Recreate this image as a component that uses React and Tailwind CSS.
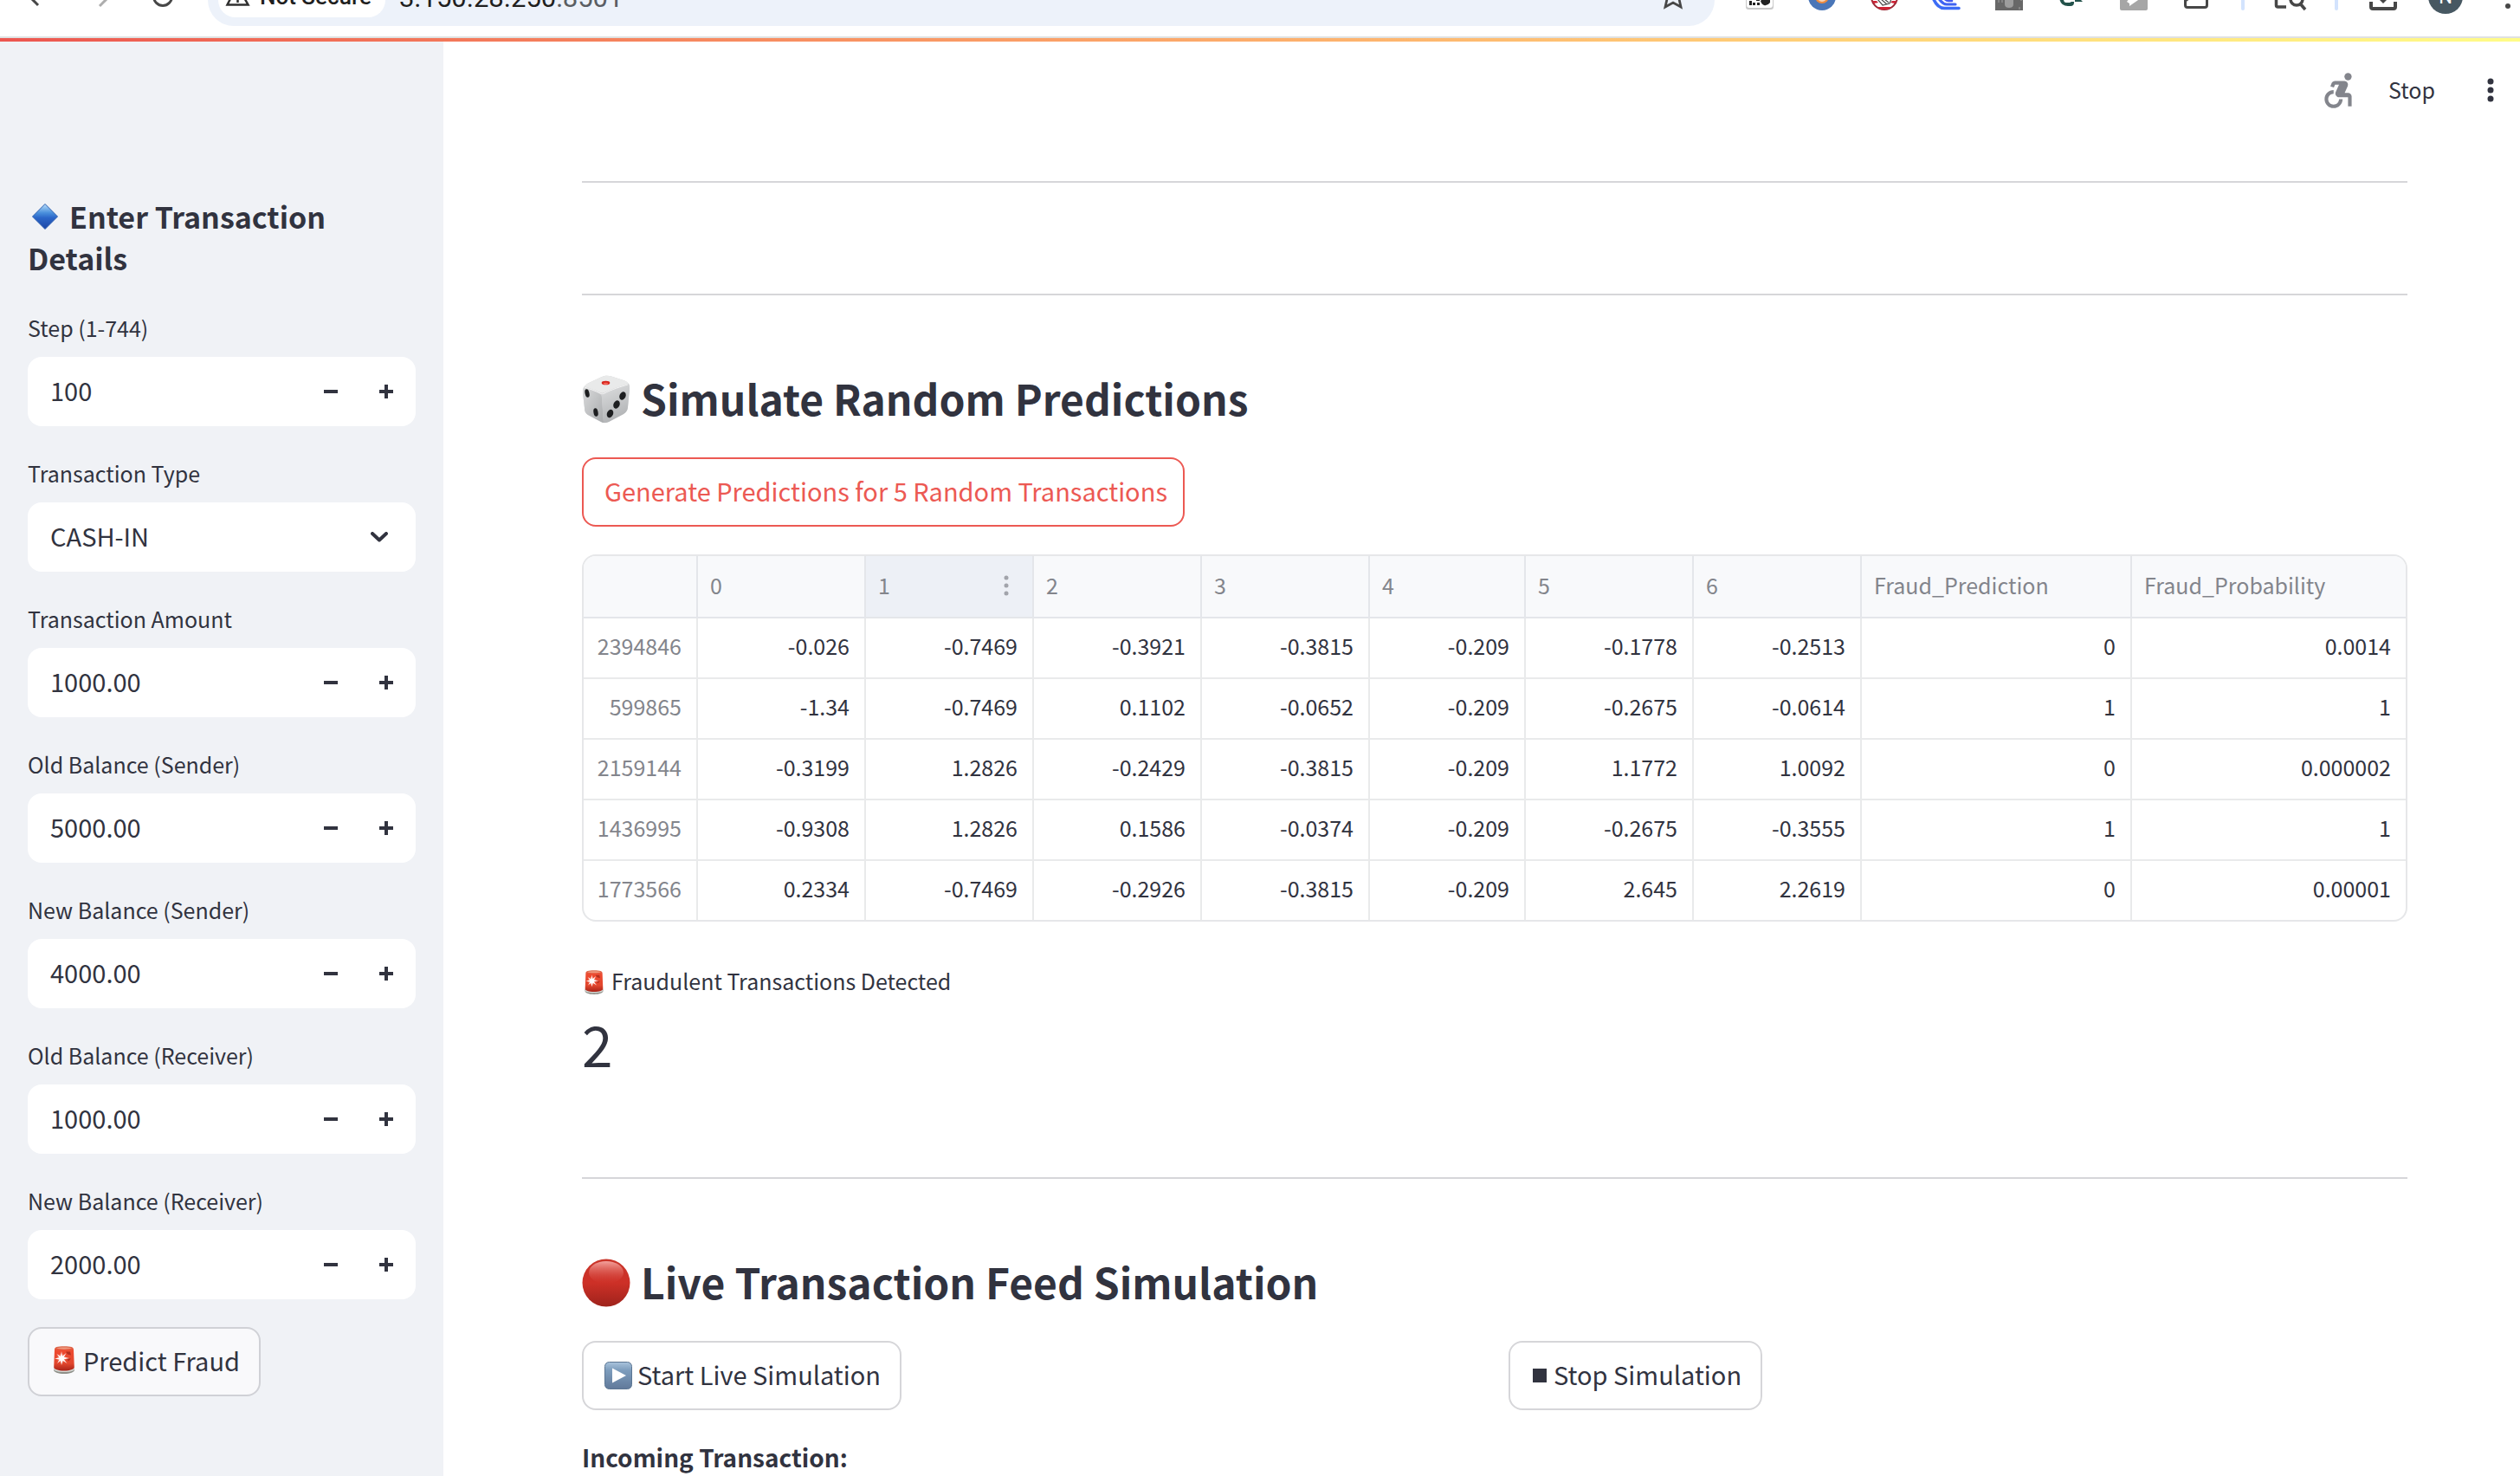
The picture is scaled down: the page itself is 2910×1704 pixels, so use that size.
import React from "react";
import { MdAccessibleForward } from "react-icons/md";

const NUMBER_FIELDS_AFTER_TYPE = [
  { id: "amount", label: "Transaction Amount", value: "1000.00" },
  { id: "old-sender", label: "Old Balance (Sender)", value: "5000.00" },
  { id: "new-sender", label: "New Balance (Sender)", value: "4000.00" },
  { id: "old-receiver", label: "Old Balance (Receiver)", value: "1000.00" },
  { id: "new-receiver", label: "New Balance (Receiver)", value: "2000.00" },
];

const COLUMNS = ["0", "1", "2", "3", "4", "5", "6", "Fraud_Prediction", "Fraud_Probability"];

const ROWS = [
  ["2394846", "-0.026", "-0.7469", "-0.3921", "-0.3815", "-0.209", "-0.1778", "-0.2513", "0", "0.0014"],
  ["599865", "-1.34", "-0.7469", "0.1102", "-0.0652", "-0.209", "-0.2675", "-0.0614", "1", "1"],
  ["2159144", "-0.3199", "1.2826", "-0.2429", "-0.3815", "-0.209", "1.1772", "1.0092", "0", "0.000002"],
  ["1436995", "-0.9308", "1.2826", "0.1586", "-0.0374", "-0.209", "-0.2675", "-0.3555", "1", "1"],
  ["1773566", "0.2334", "-0.7469", "-0.2926", "-0.3815", "-0.209", "2.645", "2.2619", "0", "0.00001"],
];

function DiamondEmoji() {
  return (
    <svg className="h-8 w-8 shrink-0" viewBox="0 0 32 32" aria-hidden="true">
      <defs>
        <linearGradient id="diamond" x1="0" y1="0" x2="0" y2="1">
          <stop offset="0" stopColor="#b9defa" />
          <stop offset="0.35" stopColor="#4a90dc" />
          <stop offset="0.55" stopColor="#2b66c8" />
          <stop offset="1" stopColor="#1c46a5" />
        </linearGradient>
      </defs>
      <path d="M16 1.5 30.500 16 16 30.500 1.500 16Z" fill="url(#diamond)" stroke="#2a5cae" strokeWidth="1" strokeLinejoin="round" />
    </svg>
  );
}

function SirenEmoji({ className }) {
  return (
    <svg className={className} viewBox="0 0 24 32" aria-hidden="true">
      <defs>
        <linearGradient id="siren-glass" x1="0" y1="0" x2="0" y2="1">
          <stop offset="0" stopColor="#d9694c" />
          <stop offset="0.2" stopColor="#ee4a30" />
          <stop offset="0.7" stopColor="#e2472e" />
          <stop offset="1" stopColor="#a92318" />
        </linearGradient>
        <radialGradient id="siren-glow">
          <stop offset="0" stopColor="#ffffff" />
          <stop offset="0.5" stopColor="#ffc9bd" stopOpacity="0.6" />
          <stop offset="1" stopColor="#ff8a75" stopOpacity="0" />
        </radialGradient>
      </defs>
      <path d="M0 25h24v2.500c0 2.500-5 4.500-12 4.500S0 30 0 27.500Z" fill="#8e8f88" />
      <path d="M0 25h24v1.500c0 2-5 3.500-12 3.500S0 28.500 0 26.500Z" fill="#d5d8d4" />
      <path d="M1 4C1 1.200 4 .3 12 .3S23 1.200 23 4l.8 20.500c0 2.300-5 4-11.800 4S.2 26.800.2 24.500Z" fill="url(#siren-glass)" />
      <path d="M3 2.500C6 1 18 1 21 2.500 18 4 6 4 3 2.500Z" fill="#f3b49a" opacity="0.7" />
      <path d="M14 6.500h5l1 4-4-1M15 14.500h5l-3 3z" fill="#b5301f" />
      <circle cx="9" cy="14" r="6" fill="url(#siren-glow)" />
      <path d="M9 6l1 5.700 4.500-3.700-2.800 4.800L18 14l-6.300 1.200 3.800 4.800-5-3.200L9 22l-1-5.200L4 20l2.700-4.500L1 14.500l5.500-1.300L3.500 9 8 12Z" fill="#fff" />
    </svg>
  );
}

function DiceEmoji() {
  return (
    <svg className="h-14 w-14 shrink-0" viewBox="0 0 56 56" aria-hidden="true">
      <defs>
        <linearGradient id="dice-left" x1="0" y1="0" x2="1" y2="1">
          <stop offset="0" stopColor="#d9dadb" />
          <stop offset="1" stopColor="#a9abad" />
        </linearGradient>
        <linearGradient id="dice-right" x1="0" y1="0" x2="0.3" y2="1">
          <stop offset="0" stopColor="#dedfe0" />
          <stop offset="1" stopColor="#b2b4b6" />
        </linearGradient>
      </defs>
      <path d="M1 20C1 14 3 12 8 9L22 2.500c4-2 8-2 12-1L48 6c5 2 7 4 7 9l-2 22c-.4 4-2 6-5 8L31 54c-3 1.500-6 1.500-9 0L7 46c-3-2-4-4-4-8Z" fill="#d0d1d3" />
      <path d="M2 14c4 1 14 5 19 8 1.500 1 2 3 2 5l2 28c-1 0-2-.4-3-1L7 46c-3-2-4-4-4-8L1 20c0-2 .2-4 1-6Z" fill="url(#dice-left)" />
      <path d="M54 10c-7 2-21 7-28 11-2 1-3 3-3 6l2 28c2 .3 4 0 6-1l17-9c3-2 4.600-4 5-8l2-22c0-2-.3-3.700-1-5Z" fill="url(#dice-right)" />
      <path d="M2.500 13C4 11 6 10 8 9l14-6.500c4-2 8-2 12-1L48 6c3 1 5 2 6 4-6 2-20 6-28 10-2 1-3 1-5 0-6-3-13-5-18.500-7Z" fill="#e9eaea" />
      <path d="M3 14c6 2 12 4 18 7 2 1 3 1 5 0 7-4 20-8 27-10" fill="none" stroke="#f4f4f4" strokeWidth="1" />
      <ellipse cx="27.500" cy="9" rx="4.800" ry="2.300" fill="#d8271f" />
      <ellipse cx="27.500" cy="9.800" rx="2.800" ry="1" fill="#f6695c" />
      <g fill="#1d1e20">
        <ellipse cx="6" cy="21" rx="2.500" ry="4.800" transform="rotate(-12 6 21)" />
        <ellipse cx="16" cy="43" rx="2.600" ry="4.800" transform="rotate(-10 16 43)" />
        <ellipse cx="47" cy="24" rx="3.600" ry="4.800" transform="rotate(22 47 24)" />
        <ellipse cx="40" cy="34" rx="3.600" ry="4.800" transform="rotate(22 40 34)" />
        <ellipse cx="32.500" cy="44.500" rx="3.600" ry="4.800" transform="rotate(22 32.500 44.500)" />
      </g>
    </svg>
  );
}

function RedCircleEmoji() {
  return (
    <svg className="h-14 w-14 shrink-0" viewBox="0 0 56 56" aria-hidden="true">
      <defs>
        <linearGradient id="ball" x1="0" y1="0" x2="0" y2="1">
          <stop offset="0" stopColor="#c9352a" />
          <stop offset="0.5" stopColor="#cd3027" />
          <stop offset="1" stopColor="#9e231c" />
        </linearGradient>
        <linearGradient id="ball-shine" x1="0" y1="0" x2="0" y2="1">
          <stop offset="0" stopColor="#f3a19c" />
          <stop offset="1" stopColor="#d8443a" stopOpacity="0" />
        </linearGradient>
      </defs>
      <circle cx="28" cy="28" r="27.500" fill="url(#ball)" />
      <ellipse cx="28" cy="16" rx="20" ry="13" fill="url(#ball-shine)" />
    </svg>
  );
}

function PlayEmoji() {
  return (
    <svg className="h-8 w-8 shrink-0" viewBox="0 0 32 32" aria-hidden="true">
      <defs>
        <linearGradient id="play" x1="0" y1="0" x2="0" y2="1">
          <stop offset="0" stopColor="#a9c3dc" />
          <stop offset="0.3" stopColor="#7d9dbd" />
          <stop offset="1" stopColor="#61799a" />
        </linearGradient>
      </defs>
      <rect x="0.500" y="0.500" width="31" height="31" rx="5" fill="url(#play)" stroke="#5c7693" />
      <path d="M9 7.500 25 16 9 24.500Z" fill="#fff" />
    </svg>
  );
}

function Slot({ label, children, className = "w-[72px]", viewBox = "-36 0 72 42" }) {
  return (
    <button type="button" aria-label={label} className={`${className} h-[42px] shrink-0`}>
      <svg className="h-[42px] w-full" viewBox={viewBox} aria-hidden="true">
        {children}
      </svg>
    </button>
  );
}

function BrowserToolbar() {
  return (
    <header className="flex h-[44px] shrink-0 overflow-hidden border-b-2 border-[#dfe1e1] bg-white pl-2 font-[Roboto,sans-serif]">
      <Slot label="Back">
        <path d="M-8-2 0 6" stroke="#474747" strokeWidth="3" fill="none" />
      </Slot>
      <Slot label="Forward">
        <path d="M8-2-1 7" stroke="#adadad" strokeWidth="3" fill="none" />
      </Slot>
      <Slot label="Reload">
        <circle cx="0" cy="-4" r="10.500" stroke="#474747" strokeWidth="3" fill="none" />
      </Slot>
      <div className="ml-4 mr-4 flex h-[30px] min-w-0 flex-1 items-start justify-between rounded-b-[34px] bg-[#edf2fa] pl-3">
        <div className="flex min-w-0 items-start">
          <button type="button" className="flex h-5 items-end rounded-b-[24px] bg-white pl-2 pr-4 text-[26px] font-medium leading-6 text-[#1f1f1f]">
            <svg className="mr-2 h-5 w-8 shrink-0" viewBox="0 0 32 20" aria-hidden="true">
              <path d="M14-17 2.500 5.500h24Z" fill="none" stroke="#303030" strokeWidth="2.500" />
              <path d="M14.500 0v3" stroke="#303030" strokeWidth="2.500" />
            </svg>
            <span className="h-9">Not Secure</span>
          </button>
          <div className="-mt-5 pl-4 text-[31px] leading-9 text-[#1f1f1f]">
            3.150.28.250<span className="text-[#5a5e63]">:8501</span>
          </div>
        </div>
        <svg className="mr-9 h-[30px] w-6 shrink-0" viewBox="0 0 24 30" aria-hidden="true">
          <path d="M1-4 5-1 3 8 12 3l9 5-2-9 4-3" fill="none" stroke="#474747" strokeWidth="2.800" />
        </svg>
      </div>
      <Slot label="QR extension">
        <path d="M-16-4H16V8q0 3-3 3h-26q-3 0-3-3Z" fill="#c9c9c9" />
        <path d="M-15-4H15V6q0 3-3 3h-24q-3 0-3-3Z" fill="#fff" />
        <path d="M-12 1h3v5h-3ZM-8 3h3v3h-3ZM-3 3h3v3h-3ZM-4-2h4v3h-4Z" fill="#222" />
        <path d="M1 1 5-3H12V3q-3 4-7 3-3-1-4-5Z" fill="#222" />
      </Slot>
      <Slot label="Blue extension">
        <circle cx="0" cy="-4" r="16" fill="#4a76b8" />
        <circle cx="0" cy="-4" r="8" fill="#ed8b3f" />
        <path d="M-4-1q4 4 8 0" fill="none" stroke="#f7d3b3" strokeWidth="2" />
      </Slot>
      <Slot label="Handshake extension">
        <circle cx="0" cy="-4" r="15" fill="#fff" stroke="#9c2733" strokeWidth="2" />
        <path d="M-14 1h5l2 2-5 1ZM14 1H9L7 3l5 1Z" fill="#cf2436" />
        <path d="M-8 8H8l-4 3h-8Z" fill="#cf2436" />
        <path d="M-8-1-2 6 6 4 8-1M-4-1 3 5M0-1 5 3" fill="none" stroke="#4a4a4a" strokeWidth="1.200" />
      </Slot>
      <Slot label="Waves extension">
        <path d="M-16-3q5 13 14 12.500H14" fill="none" stroke="#3c6cf5" strokeWidth="3.600" strokeLinecap="round" />
        <path d="M-10-3q5 8 10 8h10" fill="none" stroke="#3f63f2" strokeWidth="3.200" strokeLinecap="round" />
        <path d="M-4-3q3 4 6 4h4" fill="none" stroke="#455bee" strokeWidth="2.600" strokeLinecap="round" />
      </Slot>
      <Slot label="Lock extension">
        <path d="M-16-2h32v14h-32Z" fill="#686868" />
        <path d="M-5-2H5V5Q5 9 0 9T-5 5Z" fill="#9d9d9d" />
        <path d="M-12-1v4M-8-1v4M12 8v3M14-1v2" stroke="#8d8d8d" strokeWidth="1.500" />
      </Slot>
      <Slot label="Green extension">
        <path d="M-14-3q1 10 10 10h3q4 0 4-4v-1H0L-2 3h-4q-3 0-3-4Z" fill="#23524b" />
        <path d="M4-2h5l4 4H4Z" fill="#23524b" />
      </Slot>
      <Slot label="Grey extension">
        <path d="M-16-2h32v12q0 2-2 2h-28q-2 0-2-2Z" fill="#a6a6a6" />
        <path d="M-8 2-5-2H8L-5 7V4Z" fill="#fff" />
      </Slot>
      <Slot label="Extensions">
        <path d="M-12.500-3v4V6q0 2.500 2.500 2.500h20q2.500 0 2.500-2.500V-3M-12.500 1l4-3" fill="none" stroke="#474747" strokeWidth="3" />
      </Slot>
      <span className="mx-4 h-3 w-1 shrink-0 rounded-b-sm bg-[#d3e3fd]" />
      <Slot label="Search tabs">
        <path d="M-15.500-3V6q0 2 2 2H-4" fill="none" stroke="#474747" strokeWidth="3.500" />
        <circle cx="8" cy="-1" r="7" fill="none" stroke="#474747" strokeWidth="3.500" />
        <path d="m12 4 6 7" stroke="#474747" strokeWidth="3.500" />
      </Slot>
      <span className="mx-4 h-3 w-1 shrink-0 rounded-b-sm bg-[#d3e3fd]" />
      <Slot label="Downloads">
        <path d="M-14 2V8q0 2 2 2h24q2 0 2-2V2" fill="none" stroke="#474747" strokeWidth="4" />
        <path d="M-6-2h12L0 4Z" fill="#474747" />
      </Slot>
      <button type="button" aria-label="Profile" className="flex h-[42px] w-[72px] shrink-0 justify-center">
        <span className="-mt-6 h-10 w-10 rounded-full bg-[#475862] text-center text-[22px] leading-[42px] text-white">N</span>
      </button>
      <Slot label="Browser menu" className="w-[50px]" viewBox="-36 0 50 42">
        <circle cx="0" cy="7" r="3" fill="#474747" />
      </Slot>
    </header>
  );
}

function FieldLabel({ htmlFor, children }) {
  return (
    <label htmlFor={htmlFor} className="block pb-3 text-[25px] leading-[44px]">
      {children}
    </label>
  );
}

function NumberField({ id, label, value }) {
  return (
    <div>
      <FieldLabel htmlFor={id}>{label}</FieldLabel>
      <div className="flex h-20 items-center rounded-2xl bg-white pr-[2px]">
        <input id={id} type="text" inputMode="decimal" defaultValue={value} className="h-full min-w-0 flex-1 bg-transparent pb-1 pl-[26px] text-[29px] leading-10 outline-none" />
        <button type="button" aria-label={`Decrease ${label}`} className="flex h-full w-16 items-center justify-center">
          <span className="h-1 w-4 bg-[#31333f]" />
        </button>
        <button type="button" aria-label={`Increase ${label}`} className="flex h-full w-16 items-center justify-center">
          <svg className="h-4 w-4" viewBox="0 0 16 16" aria-hidden="true">
            <path d="M6 0h4v6h6v4h-6v6H6v-6H0V6h6Z" fill="#31333f" />
          </svg>
        </button>
      </div>
    </div>
  );
}

function Sidebar() {
  return (
    <aside className="w-[512px] shrink-0 bg-[#f0f2f6] px-8 pt-[182px]">
      <h2 className="mb-[34px] text-[34px] font-bold leading-[48px]">
        <span className="mr-3 inline-flex pl-1 align-[-2px]"><DiamondEmoji /></span>
        Enter Transaction Details
      </h2>
      <form className="flex flex-col gap-8" onSubmit={(e) => e.preventDefault()}>
        <NumberField id="step" label="Step (1-744)" value="100" />
        <div>
          <FieldLabel htmlFor="type">Transaction Type</FieldLabel>
          <div className="relative h-20 rounded-2xl bg-white">
            <select id="type" defaultValue="CASH-IN" className="h-full w-full appearance-none bg-transparent pb-[2px] pl-[26px] text-[29px] outline-none">
              <option>CASH-IN</option>
              <option>CASH-OUT</option>
              <option>DEBIT</option>
              <option>PAYMENT</option>
              <option>TRANSFER</option>
            </select>
            <svg className="pointer-events-none absolute right-8 top-[34px] h-3 w-5" viewBox="0 0 20 12" aria-hidden="true">
              <path d="m2 2 8 7.500L18 2" fill="none" stroke="#31333f" strokeWidth="4" strokeLinecap="round" strokeLinejoin="round" />
            </svg>
          </div>
        </div>
        {NUMBER_FIELDS_AFTER_TYPE.map((f) => (
          <NumberField key={f.id} {...f} />
        ))}
        <button type="submit" className="flex h-20 items-center gap-[10px] self-start rounded-2xl border-2 border-[#d0d1d6] bg-[#f9f9fb] pl-7 pr-[22px] text-[29px] leading-10">
          <SirenEmoji className="-mt-1 h-8 w-6 shrink-0" />
          <span className="pb-1">Predict Fraud</span>
        </button>
      </form>
    </aside>
  );
}

function ResultsTable() {
  return (
    <div className="overflow-hidden rounded-2xl border-2 border-[#e6e7e9]">
      <table className="w-full table-fixed border-separate border-spacing-0 text-[25px] leading-8">
        <colgroup>
          <col className="w-[132px]" />
          <col className="w-[194px]" />
          <col className="w-[194px]" />
          <col className="w-[194px]" />
          <col className="w-[194px]" />
          <col className="w-[180px]" />
          <col className="w-[194px]" />
          <col className="w-[194px]" />
          <col className="w-[312px]" />
          <col />
        </colgroup>
        <thead>
          <tr className="h-[72px] bg-[#f8f9fb] text-left text-[#83858c]">
            <th className="border-b-2 border-r-2 border-[#e4e6ea]" aria-label="Index" />
            {COLUMNS.map((name) => (
              <th
                key={name}
                scope="col"
                className={`border-b-2 border-r-2 border-[#e4e6ea] px-[14px] pb-1 font-normal last:border-r-0 ${name === "1" ? "bg-[#edf0f6]" : ""}`}
              >
                <span className="flex items-center justify-between">
                  {name}
                  {name === "1" && (
                    <svg className="mr-3 h-7 w-2" viewBox="0 0 8 28" aria-hidden="true">
                      <circle cx="4" cy="6" r="2.500" fill="#a2a4ab" />
                      <circle cx="4" cy="15" r="2.500" fill="#a2a4ab" />
                      <circle cx="4" cy="24" r="2.500" fill="#a2a4ab" />
                    </svg>
                  )}
                </span>
              </th>
            ))}
          </tr>
        </thead>
        <tbody>
          {ROWS.map((row, r) => {
            const last = r === ROWS.length - 1;
            const edge = last ? "" : "border-b-2";
            return (
              <tr key={row[0]} className={`text-right ${last ? "h-[68px]" : "h-[70px]"}`}>
                {row.map((cell, c) =>
                  c === 0 ? (
                    <th key={c} scope="row" className={`${edge} border-r-2 border-[#e9eaeb] pb-[6px] pr-[17px] text-right font-normal text-[#83858c]`}>{cell}</th>
                  ) : (
                    <td key={c} className={`${edge} border-r-2 border-[#e9eaeb] pb-[6px] pr-[17px] last:border-r-0`}>{cell}</td>
                  )
                )}
              </tr>
            );
          })}
        </tbody>
      </table>
    </div>
  );
}

function Main() {
  return (
    <main className="min-w-0 flex-1">
      <div className="flex h-[120px] items-center justify-end pr-[22px]">
        <MdAccessibleForward className="h-[50px] w-[50px] text-[#83858c]" aria-label="Running" />
        <button type="button" className="ml-8 pb-[3px] text-[25px] leading-10">Stop</button>
        <button type="button" aria-label="Menu" className="ml-[52px] h-10 w-6">
          <svg className="h-10 w-6" viewBox="0 0 24 40" aria-hidden="true">
            <circle cx="12" cy="10" r="3.500" fill="#31333f" />
            <circle cx="12" cy="20" r="3.500" fill="#31333f" />
            <circle cx="12" cy="30" r="3.500" fill="#31333f" />
          </svg>
        </button>
      </div>

      <div className="pl-40 pr-[130px] pt-[45px]">
        <hr className="border-0 border-t-2 border-[#d6d6d9]" />
        <hr className="mt-32 border-0 border-t-2 border-[#d6d6d9]" />

        <section className="pt-[86px]">
          <h2 className="flex items-center gap-3 text-[48px] font-bold leading-[64px]">
            <DiceEmoji />
            <span className="pb-1">Simulate Random Predictions</span>
          </h2>
          <button type="button" className="mt-[33px] h-20 rounded-2xl border-2 border-[#ec5953] pb-1 pl-6 pr-[18px] text-[29px] leading-10 text-[#ec5953]">
            Generate Predictions for 5 Random Transactions
          </button>
          <div className="mt-8">
            <ResultsTable />
          </div>
          <p className="mt-[50px] flex items-center gap-2 text-[25px] leading-9">
            <SirenEmoji className="ml-[2px] h-7 w-6 shrink-0" />
            <span className="pb-1">Fraudulent Transactions Detected</span>
          </p>
          <p className="mt-2 text-[64px] leading-[84px]">2</p>
        </section>

        <hr className="mt-[113px] border-0 border-t-2 border-[#d6d6d9]" />

        <section className="pt-[86px]">
          <h2 className="flex items-center gap-3 text-[48px] font-bold leading-[64px]">
            <RedCircleEmoji />
            <span className="pb-1">Live Transaction Feed Simulation</span>
          </h2>
          <div className="mt-[33px] grid grid-cols-2 gap-8">
            <button type="button" className="flex h-20 items-center gap-[6px] justify-self-start rounded-2xl border-2 border-[#d6d6d9] pl-6 pr-[22px] text-[29px] leading-10">
              <PlayEmoji />
              <span className="pb-1">Start Live Simulation</span>
            </button>
            <button type="button" className="flex h-20 items-center gap-[6px] justify-self-start rounded-2xl border-2 border-[#d6d6d9] pl-6 pr-[22px] text-[29px] leading-10">
              <span className="mx-[2px] h-4 w-4 shrink-0 bg-[#31333f]" />
              <span className="pb-1">Stop Simulation</span>
            </button>
          </div>
          <p className="mt-[30px] text-[28px] font-bold leading-[48px]">Incoming Transaction:</p>
        </section>
      </div>
    </main>
  );
}

export default function App() {
  return (
    <div className="flex h-screen flex-col overflow-hidden bg-white font-['Noto_Sans_CJK_SC',sans-serif] text-[#31333f]">
      <BrowserToolbar />
      <div className="relative flex min-h-0 flex-1">
        <div className="absolute inset-x-0 top-0 h-1 bg-linear-to-r from-[#ec5650] to-[#fffc88]" />
        <Sidebar />
        <Main />
      </div>
    </div>
  );
}
